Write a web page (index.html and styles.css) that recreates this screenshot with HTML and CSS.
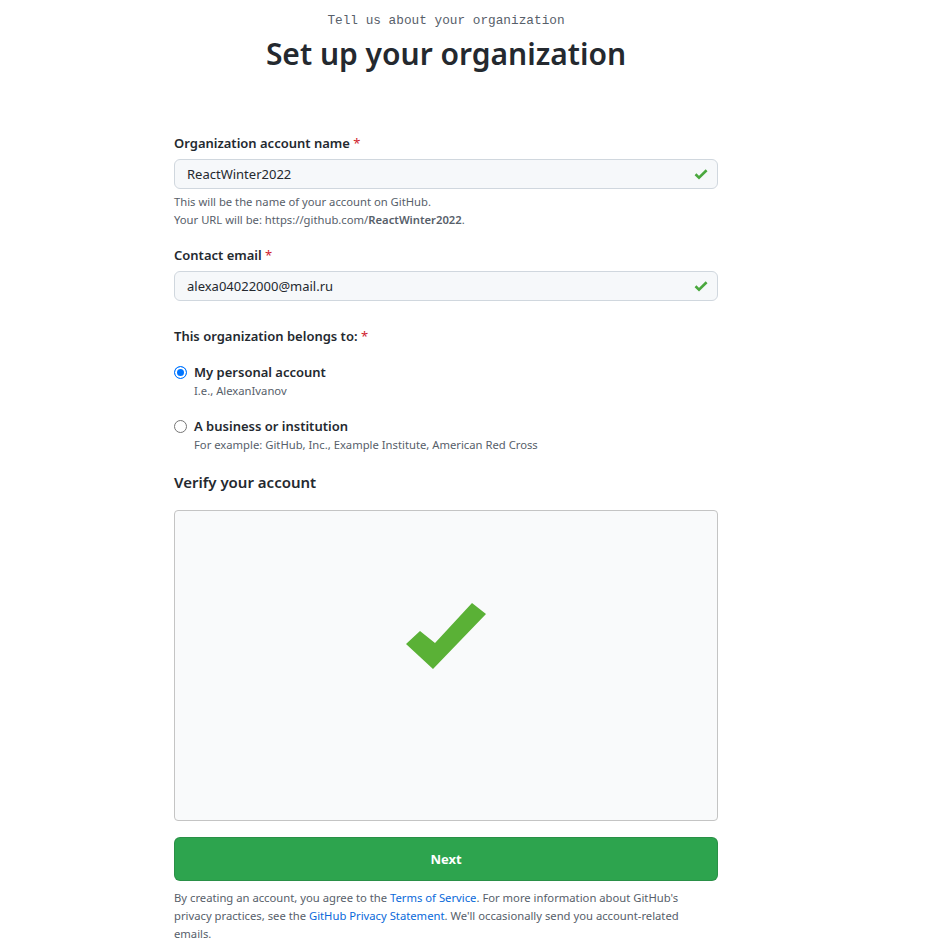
FILE: index.html
```html
<!DOCTYPE html>
<html lang="en">
<head>
<meta charset="utf-8">
<title>Set up your organization</title>
<link rel="stylesheet" href="styles.css">
</head>
<body>
<div class="page">
  <header class="head">
    <p class="eyebrow">Tell us about your organization</p>
    <h1 class="title">Set up your organization</h1>
  </header>
  <form class="form">
    <div class="field">
      <label class="label">Organization account name <span class="req">*</span></label>
      <div class="input-wrap">
        <input class="input" type="text" value="ReactWinter2022">
        <svg class="ok" viewBox="0 0 16 16" width="16" height="16"><polyline points="2.5,8.3 6,11.6 13.6,4.2"/></svg>
      </div>
      <p class="note">This will be the name of your account on GitHub.<br>Your URL will be: https://github.com/<b>ReactWinter2022</b>.</p>
    </div>
    <div class="field field-email">
      <label class="label">Contact email <span class="req">*</span></label>
      <div class="input-wrap">
        <input class="input" type="text" value="alexa04022000@mail.ru">
        <svg class="ok" viewBox="0 0 16 16" width="16" height="16"><polyline points="2.5,8.3 6,11.6 13.6,4.2"/></svg>
      </div>
    </div>
    <div class="field field-belongs">
      <p class="label">This organization belongs to: <span class="req">*</span></p>
      <div class="option">
        <span class="radio checked"></span>
        <div class="opt-text">
          <p class="opt-label">My personal account</p>
          <p class="opt-note">I.e., AlexanIvanov</p>
        </div>
      </div>
      <div class="option">
        <span class="radio"></span>
        <div class="opt-text">
          <p class="opt-label">A business or institution</p>
          <p class="opt-note">For example: GitHub, Inc., Example Institute, American Red Cross</p>
        </div>
      </div>
    </div>
    <h2 class="verify">Verify your account</h2>
    <div class="captcha">
      <svg class="big-check" viewBox="0 0 82 68" width="82" height="68"><polygon points="0,41 14,28 29,40 66,0 80,11 27,66"/></svg>
    </div>
    <button type="button" class="next">Next</button>
    <p class="legal">By creating an account, you agree to the <a href="#">Terms of Service</a>. For more information about GitHub's privacy practices, see the <a href="#">GitHub Privacy Statement</a>. We'll occasionally send you account-related emails.</p>
  </form>
</div>
</body>
</html>
```
FILE: styles.css
```css
* { box-sizing: border-box; }
html, body { margin: 0; padding: 0; background: #fff; }
body {
  font-family: "Noto Sans", "Liberation Sans", sans-serif;
  color: #24292f;
}
p, h1, h2 { margin: 0; }
.page { width: 892px; }
.head { text-align: center; padding-top: 12px; }
.eyebrow {
  font-family: "Liberation Mono", "DejaVu Sans Mono", monospace;
  font-size: 12.75px;
  line-height: 18px;
  color: #57606a;
}
.title {
  margin-top: 4px;
  font-size: 30px;
  line-height: 40px;
  font-weight: 600;
  color: #24292f;
}
.form { width: 544px; margin: 59px auto 0; }
.label {
  display: block;
  font-size: 13px;
  line-height: 20px;
  font-weight: 600;
}
.req { color: #cf222e; font-weight: 400; }
.input-wrap { position: relative; margin-top: 6px; }
.input {
  display: block;
  width: 100%;
  height: 30px;
  padding: 0 12px;
  font: inherit;
  font-size: 13px;
  color: #24292f;
  background: #f6f8fa;
  border: 1px solid #d0d7de;
  border-radius: 6px;
  outline: none;
}
.ok {
  position: absolute;
  right: 9px;
  top: 7px;
  fill: none;
  stroke: #4aa83e;
  stroke-width: 2.6;
}
.note {
  margin-top: 4px;
  font-size: 11.25px;
  line-height: 18px;
  color: #57606a;
}
.note b { font-weight: 600; color: #57606a; }
.field-email { margin-top: 16px; }
.field-belongs { margin-top: 25px; }
.option { display: flex; gap: 7px; margin-top: 16px; }
.radio {
  flex: none;
  width: 13px;
  height: 13px;
  margin-top: 4px;
  border: 1px solid #767676;
  border-radius: 50%;
  background: #fff;
}
.radio.checked {
  background: #0075ff;
  border: 1px solid #0075ff;
  box-shadow: inset 0 0 0 2px #fff;
}
.opt-label { font-size: 13px; line-height: 20px; font-weight: 600; }
.opt-note { font-size: 11.25px; line-height: 18px; color: #57606a; }
.verify {
  margin-top: 16px;
  font-size: 15px;
  line-height: 24px;
  font-weight: 600;
}
.captcha {
  margin-top: 16px;
  height: 311px;
  background: #f9fafb;
  border: 1px solid #c4c4c4;
  border-radius: 4px;
  display: flex;
  justify-content: center;
  padding-top: 92px;
}
.big-check { fill: #5ab136; margin-left: 2px; }
.next {
  display: block;
  width: 100%;
  height: 44px;
  margin-top: 16px;
  font: inherit;
  font-size: 13px;
  font-weight: 700;
  color: #fff;
  background: #2da44e;
  border: 1px solid rgba(27,31,36,0.15);
  border-radius: 6px;
}
.legal {
  margin-top: 8px;
  font-size: 11.25px;
  line-height: 18px;
  color: #57606a;
}
.legal a { color: #0969da; text-decoration: none; }
```
